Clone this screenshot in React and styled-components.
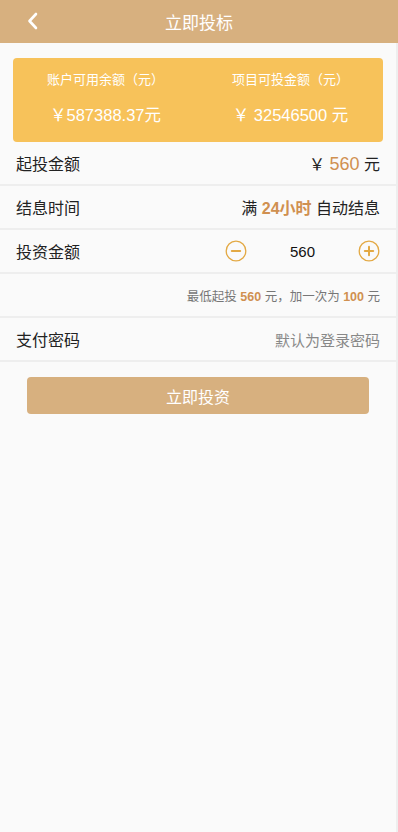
import React from 'react';
import styled, { createGlobalStyle } from 'styled-components';

const GlobalStyle = createGlobalStyle`
  html, body {
    margin: 0;
    padding: 0;
    background: #fafafa;
    font-family: "Liberation Sans", "Noto Sans CJK SC", sans-serif;
  }
  * { box-sizing: border-box; }
`;

const Page = styled.div`
  min-height: 832px;
  background: #fafafa;
  border-right: 2px solid #eeeeee;
`;

const Header = styled.header`
  height: 43px;
  background: #d7b07f;
  display: flex;
  align-items: center;
  justify-content: center;
  position: relative;
  margin-right: -2px;
`;

const Title = styled.h1`
  margin: 0;
  font-size: 17px;
  font-weight: normal;
  color: #fff;
`;

const BackBtn = styled.button`
  position: absolute;
  left: 21px;
  top: 9px;
  width: 24px;
  height: 24px;
  padding: 0;
  border: 0;
  background: none;
  display: flex;
  align-items: center;
  justify-content: center;
`;

const Card = styled.section`
  margin: 15px 13px 0;
  height: 84px;
  background: #f7c25a;
  border-radius: 4px;
  display: grid;
  grid-template-columns: 1fr 1fr;
  color: #fff;
`;

const CardCol = styled.div`
  display: flex;
  flex-direction: column;
  align-items: center;
  padding-top: 14px;
`;

const CardLabel = styled.div`
  font-size: 13px;
  line-height: 16px;
`;

const CardValue = styled.div`
  font-size: 16.5px;
  line-height: 20px;
  margin-top: 17px;
`;

const Row = styled.div`
  height: 44px;
  padding: 0 16px;
  display: flex;
  align-items: center;
  justify-content: space-between;
  border-bottom: 2px solid #eeeeee;
  font-size: 16px;
  color: #222;
`;

const Hint = styled.div`
  margin-left: auto;
  color: #777;
  font-size: 12.5px;
`;

const Accent = styled.span`
  color: #d09050;
  font-weight: ${(p) => (p.$bold ? 'bold' : 'normal')};
  font-size: ${(p) => p.$size || 'inherit'};
`;

const Muted = styled.span`
  color: #888;
  font-size: 15px;
`;

const Stepper = styled.div`
  display: flex;
  align-items: center;
  width: 155px;
  justify-content: space-between;
`;

const StepValue = styled.span`
  font-size: 15px;
  color: #111;
`;

const StepBtn = styled.button`
  width: 22px;
  height: 22px;
  padding: 0;
  border: 0;
  background: none;
  display: flex;
`;

const Submit = styled.button`
  display: block;
  margin: 15px 27px 0;
  width: calc(100% - 54px);
  height: 37px;
  border: 0;
  border-radius: 4px;
  background: #d7b07f;
  color: #fff;
  font-size: 16px;
  font-family: inherit;
`;

const Circle = ({ plus }) => (
  <svg width="22" height="22" viewBox="0 0 22 22">
    <circle cx="11" cy="11" r="9.8" fill="none" stroke="#e3a944" strokeWidth="1.3" />
    <path d="M6.8 11h8.4" stroke="#e3a944" strokeWidth="2" strokeLinecap="round" />
    {plus && <path d="M11 6.8v8.4" stroke="#e3a944" strokeWidth="2" strokeLinecap="round" />}
  </svg>
);

export default function App() {
  return (
    <Page>
      <GlobalStyle />
      <Header>
        <BackBtn aria-label="back">
          <svg width="14" height="18" viewBox="0 0 14 18">
            <path d="M10 2L3.5 9l6.5 7" fill="none" stroke="#fff" strokeWidth="2.6" strokeLinecap="round" strokeLinejoin="round" />
          </svg>
        </BackBtn>
        <Title>立即投标</Title>
      </Header>
      <Card>
        <CardCol>
          <CardLabel>账户可用余额（元）</CardLabel>
          <CardValue>￥587388.37元</CardValue>
        </CardCol>
        <CardCol>
          <CardLabel>项目可投金额（元）</CardLabel>
          <CardValue>￥ 32546500 元</CardValue>
        </CardCol>
      </Card>
      <Row>
        <span>起投金额</span>
        <span>
          ￥ <Accent $size="18px">560</Accent> 元
        </span>
      </Row>
      <Row>
        <span>结息时间</span>
        <span>
          满 <Accent $bold>24小时</Accent> 自动结息
        </span>
      </Row>
      <Row>
        <span>投资金额</span>
        <Stepper>
          <StepBtn aria-label="minus"><Circle /></StepBtn>
          <StepValue>560</StepValue>
          <StepBtn aria-label="plus"><Circle plus /></StepBtn>
        </Stepper>
      </Row>
      <Row>
        <Hint>
          最低起投 <Accent $bold>560</Accent> 元，加一次为 <Accent $bold>100</Accent> 元
        </Hint>
      </Row>
      <Row>
        <span>支付密码</span>
        <Muted>默认为登录密码</Muted>
      </Row>
      <Submit>立即投资</Submit>
    </Page>
  );
}
